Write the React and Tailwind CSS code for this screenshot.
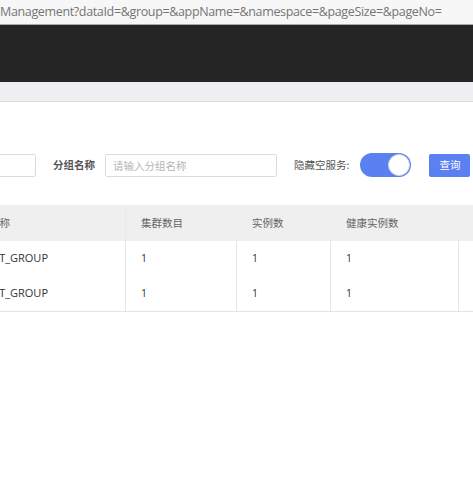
import React, { useState } from 'react';

const cjk = { fontFamily: '"Noto Sans CJK SC", "Noto Sans", sans-serif' };

const rows = [
  { group: 'DEFAULT_GROUP', clusters: 1, instances: 1, healthy: 1 },
  { group: 'DEFAULT_GROUP', clusters: 1, instances: 1, healthy: 1 },
];

const App = () => {
  const [hideEmpty, setHideEmpty] = useState(true);

  return (
    <div className="w-[473px] h-[477px] overflow-hidden bg-white" style={cjk}>
      {/* address bar */}
      <div className="h-[25px] bg-[#f7f7f7] border-b border-[#a9a9a9] flex items-center overflow-hidden whitespace-nowrap">
        <span className="text-[12.5px] text-[#747474] font-['Open_Sans',sans-serif] tracking-[-0.35px]">
          Management?dataId=&amp;group=&amp;appName=&amp;namespace=&amp;pageSize=&amp;pageNo=
        </span>
      </div>

      {/* dark header */}
      <div className="h-[57px] bg-[#252525]" />

      {/* breadcrumb strip */}
      <div className="h-[20px] bg-[#efeff1] border-b border-[#d9d9d9]" />

      {/* content, scrolled horizontally */}
      <div className="overflow-hidden">
        <div className="-ml-[140px] w-[660px]">
          <div className="h-[51px]" />

          {/* filter row */}
          <div className="flex items-center h-[24px]">
            <div className="w-[70px]" />
            <input
              className="w-[106px] h-[23px] border border-[#dcdcdc] rounded-[2px] outline-none"
              readOnly
            />
            <span className="ml-[17px] text-[10.5px] font-bold text-[#555]">分组名称</span>
            <input
              className="ml-[10px] w-[172px] h-[23px] border border-[#dcdcdc] rounded-[2px] px-[7px] text-[10.5px] outline-none placeholder:text-[#b5b5b5]"
              placeholder="请输入分组名称"
              readOnly
            />
            <span className="ml-[17px] text-[10.5px] text-[#555]">隐藏空服务:</span>
            <button
              onClick={() => setHideEmpty(!hideEmpty)}
              className={`ml-[11px] w-[51px] h-[24px] rounded-full relative ${hideEmpty ? 'bg-[#5a80f2]' : 'bg-[#ccc]'}`}
            >
              <span
                className={`absolute top-[1px] w-[22px] h-[22px] rounded-full bg-white border border-[#d6d6d6] ${hideEmpty ? 'right-[1px]' : 'left-[1px]'}`}
              />
            </button>
            <button className="ml-[18px] w-[41px] h-[23px] rounded-[2px] bg-[#5a80f2] text-white text-[10.5px]">
              查询
            </button>
          </div>

          <div className="h-[28px]" />

          {/* table */}
          <div className="text-[10.5px]">
            <div className="flex h-[36px] bg-[#efefef] text-[#666] items-center">
              <div className="w-[266px] h-full flex items-center border-r border-[#e9e9e9]">
                <span className="w-[150px] text-right">服务名称</span>
              </div>
              <div className="w-[111px] pl-[15px] h-full flex items-center">集群数目</div>
              <div className="w-[94px] pl-[15px] h-full flex items-center">实例数</div>
              <div className="w-[128px] pl-[15px] h-full flex items-center">健康实例数</div>
              <div className="flex-1" />
            </div>
            {rows.map((r, i) => (
              <div key={i} className="flex h-[35px] items-center text-[#333]">
                <div className="w-[266px] h-full flex items-center border-r border-[#e6e6e6] font-['Open_Sans',sans-serif] text-[11px]">
                  <span className="w-[188px] text-right">{r.group}</span>
                </div>
                <div className="w-[111px] pl-[15px] h-full flex items-center border-r border-[#e6e6e6] font-['Open_Sans',sans-serif]">{r.clusters}</div>
                <div className="w-[94px] pl-[15px] h-full flex items-center border-r border-[#e6e6e6] font-['Open_Sans',sans-serif]">{r.instances}</div>
                <div className="w-[128px] pl-[15px] h-full flex items-center border-r border-[#e6e6e6] font-['Open_Sans',sans-serif]">{r.healthy}</div>
                <div className="flex-1" />
              </div>
            ))}
            <div className="border-t border-[#e3e3e3]" />
          </div>
        </div>
      </div>
    </div>
  );
};

export default App;
